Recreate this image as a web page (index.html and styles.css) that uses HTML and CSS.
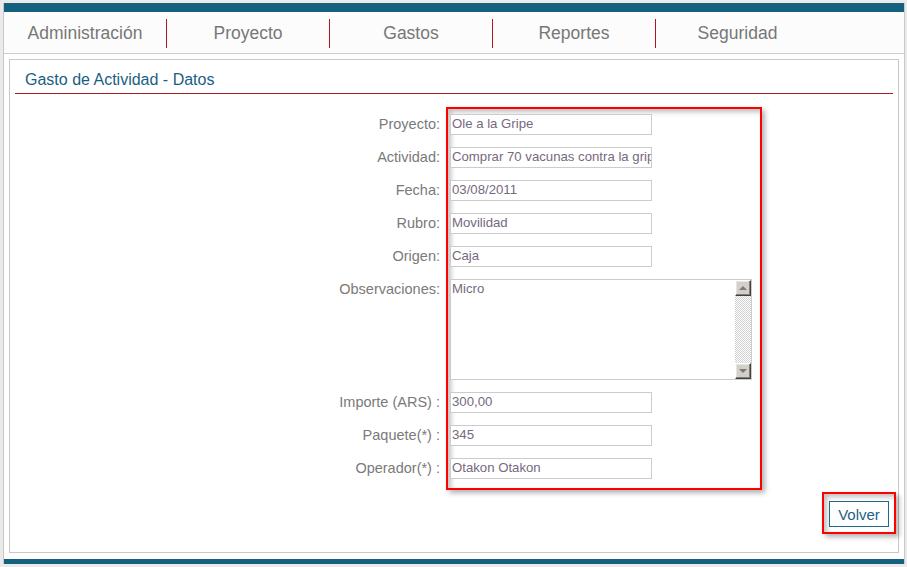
FILE: index.html
```html
<!DOCTYPE html>
<html lang="es">
<head>
<meta charset="utf-8">
<title>Gasto de Actividad - Datos</title>
<link rel="stylesheet" href="styles.css">
</head>
<body>
<div class="page">
  <div class="topbar"></div>
  <nav class="nav">
    <a class="nav-item">Administración</a>
    <a class="nav-item">Proyecto</a>
    <a class="nav-item">Gastos</a>
    <a class="nav-item">Reportes</a>
    <a class="nav-item last">Seguridad</a>
  </nav>
  <section class="panel">
    <h1 class="title">Gasto de Actividad - Datos</h1>
    <div class="form">
      <div class="labels">
        <div class="label">Proyecto:</div>
        <div class="label">Actividad:</div>
        <div class="label">Fecha:</div>
        <div class="label">Rubro:</div>
        <div class="label">Origen:</div>
        <div class="label tall">Observaciones:</div>
        <div class="label">Importe (ARS) :</div>
        <div class="label">Paquete(*) :</div>
        <div class="label">Operador(*) :</div>
      </div>
      <div class="fields highlight">
        <div class="field">Ole a la Gripe</div>
        <div class="field">Comprar 70 vacunas contra la gripe</div>
        <div class="field">03/08/2011</div>
        <div class="field">Movilidad</div>
        <div class="field">Caja</div>
        <div class="textarea">
          <div class="textarea-text">Micro</div>
          <div class="scrollbar">
            <div class="sb-btn"><span class="arrow-up"></span></div>
            <div class="sb-track"></div>
            <div class="sb-btn"><span class="arrow-down"></span></div>
          </div>
        </div>
        <div class="field">300,00</div>
        <div class="field">345</div>
        <div class="field">Otakon Otakon</div>
      </div>
    </div>
    <div class="actions">
      <div class="highlight btn-wrap">
        <button class="btn">Volver</button>
      </div>
    </div>
  </section>
  <div class="bottombar"></div>
</div>
</body>
</html>
```
FILE: styles.css
```css
html, body {
  margin: 0;
  padding: 0;
  background: #eaeaea;
}
body {
  padding: 3px 0 0 3px;
  font-family: "Liberation Sans", Arial, sans-serif;
}
.page {
  width: 900px;
  height: 561px;
  background: #ffffff;
  border-left: 1px solid #c9c9c9;
  border-right: 1px solid #c9c9c9;
  display: flex;
  flex-direction: column;
  box-sizing: content-box;
}
.topbar {
  height: 9px;
  background: #14607f;
  flex: none;
}
.bottombar {
  height: 5px;
  background: #14607f;
  flex: none;
  margin-top: 6px;
}
.nav {
  height: 41px;
  flex: none;
  display: flex;
  align-items: center;
  background: #fcfcfc;
  border-bottom: 1px solid #cfcfcf;
}
.nav-item {
  width: 163px;
  height: 29px;
  line-height: 29px;
  text-align: center;
  font-size: 17.5px;
  color: #777777;
  border-right: 1px solid #b3161d;
  box-sizing: border-box;
  margin-top: 1px;
}
.nav-item.last {
  border-right: none;
}
.panel {
  flex: 1;
  margin: 5px 5px 0 5px;
  border: 1px solid #c8c8c8;
  display: flex;
  flex-direction: column;
}
.title {
  margin: 0 5px;
  padding: 10px 0 3px 10px;
  font-size: 16px;
  line-height: 20px;
  font-weight: normal;
  color: #1b5e82;
  border-bottom: 1px solid #a51d1d;
}
.form {
  display: flex;
  align-items: flex-start;
  margin-top: 13px;
  padding-left: 270px;
  gap: 6px;
}
.labels {
  width: 160px;
  padding-top: 7px;
  display: flex;
  flex-direction: column;
  gap: 12px;
}
.label {
  height: 21px;
  line-height: 21px;
  text-align: right;
  font-size: 14.5px;
  color: #7a7a7a;
  white-space: nowrap;
}
.label.tall {
  height: 101px;
}
.highlight {
  border: 2px solid #ff0000;
  box-shadow: 3px 3px 5px rgba(0, 0, 0, 0.3), inset 3px 3px 5px rgba(0, 0, 0, 0.25);
}
.fields {
  box-sizing: border-box;
  width: 316px;
  padding: 5px 8px 9px 2px;
  display: flex;
  flex-direction: column;
  gap: 12px;
}
.field {
  width: 202px;
  height: 21px;
  box-sizing: border-box;
  border: 1px solid #cccccc;
  background: #ffffff;
  padding: 1px 0 0 1px;
  font-size: 13.2px;
  line-height: 15px;
  color: #76697f;
  white-space: nowrap;
  overflow: hidden;
}
.textarea {
  width: 302px;
  height: 101px;
  box-sizing: border-box;
  border: 1px solid #cccccc;
  background: #ffffff;
  display: flex;
}
.textarea-text {
  flex: 1;
  padding: 1px 0 0 1px;
  font-size: 13.2px;
  line-height: 15px;
  color: #76697f;
}
.scrollbar {
  width: 16px;
  display: flex;
  flex-direction: column;
}
.sb-btn {
  height: 16px;
  box-sizing: border-box;
  background: #d4d0c8;
  border-top: 1px solid #ffffff;
  border-left: 1px solid #ffffff;
  border-right: 1px solid #404040;
  border-bottom: 1px solid #404040;
  box-shadow: inset -1px -1px 0 #808080, inset 1px 1px 0 #e4e4e4;
  display: flex;
  align-items: center;
  justify-content: center;
}
.arrow-up {
  width: 0;
  height: 0;
  border-left: 4px solid transparent;
  border-right: 4px solid transparent;
  border-bottom: 4px solid #7a7a7a;
}
.arrow-down {
  width: 0;
  height: 0;
  border-left: 4px solid transparent;
  border-right: 4px solid transparent;
  border-top: 4px solid #7a7a7a;
}
.sb-track {
  flex: 1;
  background: repeating-conic-gradient(#cfcfcf 0 25%, #ffffff 0 50%) 0 0 / 2px 2px;
}
.actions {
  display: flex;
  justify-content: flex-end;
  margin-top: 2px;
  padding-right: 2px;
}
.btn-wrap {
  padding: 7px 5px 5px 5px;
}
.btn {
  display: block;
  width: 60px;
  height: 26px;
  margin: 0;
  padding: 0;
  background: #ffffff;
  border: 1px solid #1f6a8a;
  font-family: "Liberation Sans", Arial, sans-serif;
  font-size: 15px;
  color: #1f5f85;
  cursor: pointer;
}
```
